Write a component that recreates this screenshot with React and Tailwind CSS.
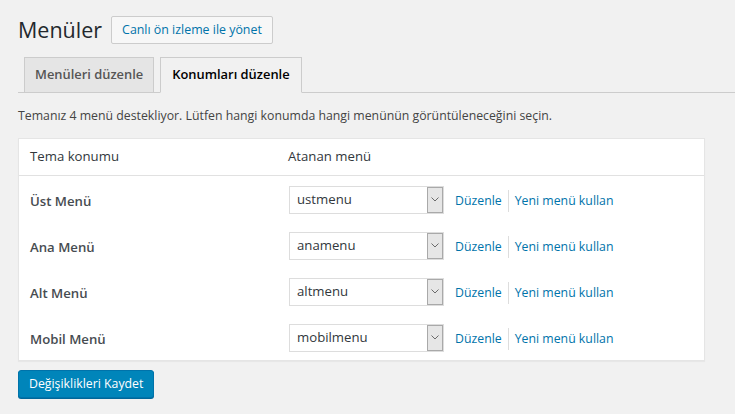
import React from 'react';

const locations = [
  { label: 'Üst Menü', value: 'ustmenu' },
  { label: 'Ana Menü', value: 'anamenu' },
  { label: 'Alt Menü', value: 'altmenu' },
  { label: 'Mobil Menü', value: 'mobilmenu' },
];

function FakeSelect({ value }) {
  return (
    <div className="flex h-[28px] w-[155px] items-stretch border border-[#dddddd] bg-white">
      <div className="flex flex-1 items-center pl-[7px] text-[13.2px] text-[#32373c]">{value}</div>
      <div className="flex w-[16px] items-center justify-center border border-[#a9a9a9] bg-[#e6e6e6]">
        <svg width="8" height="5" viewBox="0 0 8 5" fill="none">
          <path d="M0.5 0.5 L4 4 L7.5 0.5" stroke="#6b6b6b" strokeWidth="1" />
        </svg>
      </div>
    </div>
  );
}

export default function App() {
  return (
    <div className="min-h-[414px] bg-[#f1f1f1] pl-[18px] pt-[16px] text-[#444] [font-family:'Open_Sans',sans-serif]">
      <div className="flex items-center gap-[9px]">
        <h1 className="text-[21.5px] leading-[28px] font-normal text-[#23282d]">Menüler</h1>
        <button className="h-[28px] rounded-[2px] border border-[#cccccc] bg-[#f7f7f7] px-[10px] text-[12.4px] text-[#0073aa]">
          Canlı ön izleme ile yönet
        </button>
      </div>

      <div className="mt-[13px] flex gap-[6px] border-b border-[#cccccc] pl-[6px]">
        <div className="-mb-px flex h-[36px] items-center border border-[#cccccc] bg-[#e5e5e5] px-[10px] text-[12.9px] font-semibold text-[#555]">
          Menüleri düzenle
        </div>
        <div className="-mb-px flex h-[36px] items-center border border-[#cccccc] border-b-[#f1f1f1] bg-[#f1f1f1] px-[11px] text-[12.9px] font-semibold text-black">
          Konumları düzenle
        </div>
      </div>

      <p className="mt-[14px] text-[12.3px] leading-[18px] text-[#444]">
        Temanız 4 menü destekliyor. Lütfen hangi konumda hangi menünün görüntüleneceğini seçin.
      </p>

      <div className="mt-[13px] w-[687px] border border-[#e5e5e5] bg-white shadow-[0_1px_1px_rgba(0,0,0,0.04)]">
        <div className="flex h-[37px] items-center border-b border-[#e1e1e1] pl-[11px] text-[13.2px] text-[#32373c]">
          <div className="w-[258px]">Tema konumu</div>
          <div>Atanan menü</div>
        </div>
        {locations.map((loc) => (
          <div key={loc.value} className="flex h-[46px] items-center pl-[11px] pt-[1px]">
            <div className="w-[259px] pt-[4px] text-[13.2px] font-semibold text-[#474c51]">{loc.label}</div>
            <FakeSelect value={loc.value} />
            <div className="ml-[11px] flex items-center pt-[3px] text-[12.3px] text-[#0073aa]">
              <span>Düzenle</span>
              <span className="mx-[6px] h-[22px] w-px bg-[#dddddd]" />
              <span>Yeni menü kullan</span>
            </div>
          </div>
        ))}
      </div>

      <button className="mt-[9px] h-[28px] rounded-[3px] border border-[#0073aa] bg-[#0085ba] px-[10px] text-[12.3px] text-white shadow-[0_1px_0_#006799]">
        Değişiklikleri Kaydet
      </button>
    </div>
  );
}
